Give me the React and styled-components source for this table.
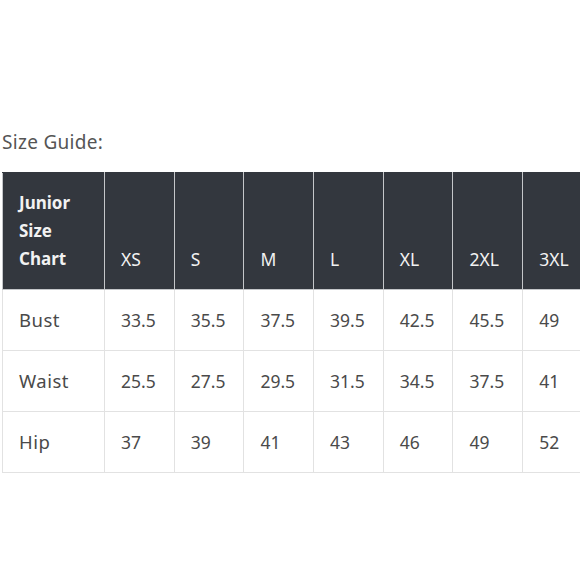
import React from "react";
import styled, { createGlobalStyle } from "styled-components";

const Global = createGlobalStyle`
  html, body { margin: 0; padding: 0; background: #fff; }
  body { width: 580px; height: 580px; overflow: hidden; font-family: "Noto Sans", "Open Sans", sans-serif; }
`;

const Page = styled.div`
  padding: 128px 0 0 2px;
  width: 578px;
  overflow: hidden;
`;

const Title = styled.div`
  font-size: 19px;
  line-height: 28px;
  letter-spacing: 0.3px;
  color: #555;
  margin-bottom: 16px;
`;

const Table = styled.table`
  border-collapse: collapse;
  table-layout: fixed;
  width: 590px;
`;

const HeadCell = styled.th`
  background: #33373e;
  color: #f2f2f2;
  font-weight: ${(p) => (p.$bold ? 700 : 400)};
  font-size: ${(p) => (p.$bold ? "17px" : "17.5px")};
  line-height: 28px;
  text-align: left;
  vertical-align: bottom;
  padding: 0 10px 16px 16px;
  height: 117px;
  box-sizing: border-box;
  border: 1px solid #c4c6c9;
  border-top-color: #33373e;
  white-space: nowrap;
`;

const Cell = styled.td`
  color: #4a4a4a;
  font-size: ${(p) => (p.$label ? "18.5px" : "17.5px")};
  letter-spacing: ${(p) => (p.$label ? "0.5px" : "0")};
  line-height: 28px;
  padding: 0 10px 0 16px;
  height: 61px;
  box-sizing: border-box;
  border: 1px solid #e2e2e2;
  vertical-align: middle;
  white-space: nowrap;
`;

const sizes = ["XS", "S", "M", "L", "XL", "2XL", "3XL"];
const rows = [
  ["Bust", "33.5", "35.5", "37.5", "39.5", "42.5", "45.5", "49"],
  ["Waist", "25.5", "27.5", "29.5", "31.5", "34.5", "37.5", "41"],
  ["Hip", "37", "39", "41", "43", "46", "49", "52"],
];

export default function App() {
  return (
    <Page>
      <Global />
      <Title>Size Guide:</Title>
      <Table>
        <colgroup>
          <col style={{ width: 102 }} />
          {sizes.map((s) => (
            <col key={s} style={{ width: 69.7 }} />
          ))}
        </colgroup>
        <thead>
          <tr>
            <HeadCell $bold>
              Junior
              <br />
              Size
              <br />
              Chart
            </HeadCell>
            {sizes.map((s) => (
              <HeadCell key={s}>{s}</HeadCell>
            ))}
          </tr>
        </thead>
        <tbody>
          {rows.map((r) => (
            <tr key={r[0]}>
              {r.map((v, i) => (
                <Cell key={i} $label={i === 0}>
                  {v}
                </Cell>
              ))}
            </tr>
          ))}
        </tbody>
      </Table>
    </Page>
  );
}
